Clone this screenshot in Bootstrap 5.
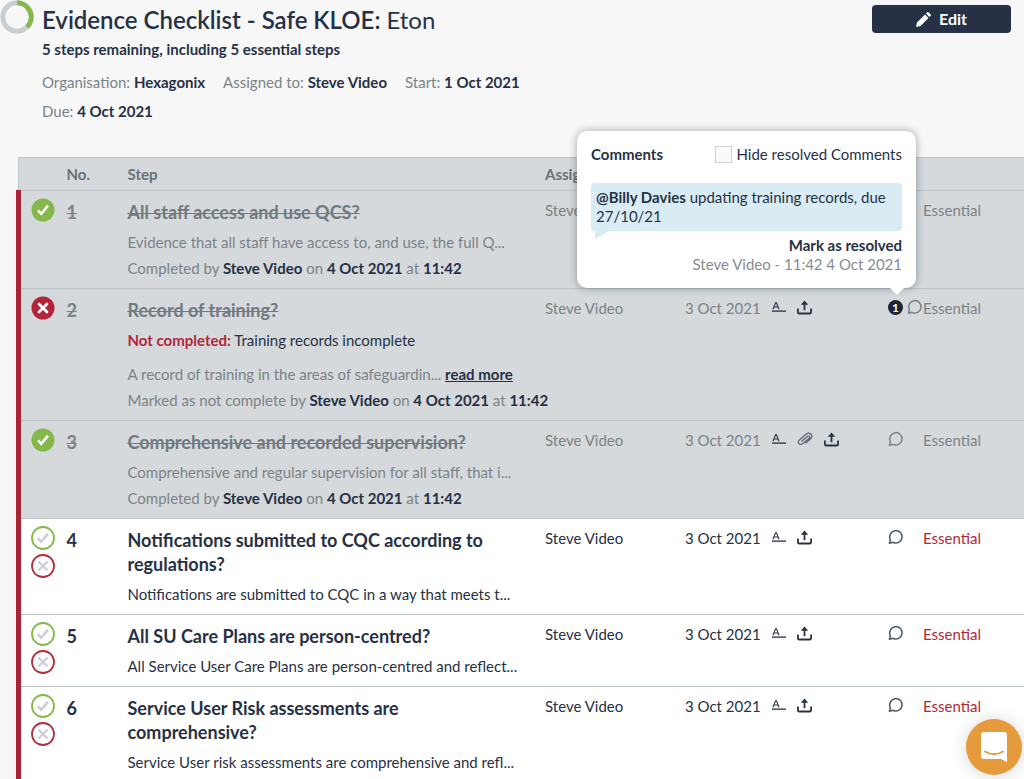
<!DOCTYPE html>
<html lang="en">
<head>
<meta charset="utf-8">
<meta name="viewport" content="width=device-width, initial-scale=1">
<title>Evidence Checklist</title>
<link href="https://cdn.jsdelivr.net/npm/bootstrap@5.3.0/dist/css/bootstrap.min.css" rel="stylesheet">
<style>
  :root { --ink: #273145; --muted-ink: #7b8387; --brand-red: #ab2335; --brand-green: #84b94a; --line: #bcc4c7; }
  body { background: #f7f7f7; color: var(--ink); font-family: Lato, "Liberation Sans", sans-serif; font-size: 16px; line-height: 24px; }
  strong, .strong-text { font-weight: 700; }
  .page-title { font-size: 24px; line-height: 32px; font-weight: 600; }
  .page-title span { font-weight: 400; }
  .summary { font-size: 15px; line-height: 26px; font-weight: 700; }
  .meta { color: var(--muted-ink); font-size: 15px; line-height: 24px; column-gap: 18px; row-gap: 5px; }
  .meta strong { color: var(--ink); }
  .ring { width: 34px; height: 34px; flex: none; }
  .intro { padding-left: 8px; padding-top: 4px; max-width: 560px; }
  .btn-edit { --bs-btn-bg: #273145; --bs-btn-color: #fff; --bs-btn-hover-bg: #38435a; --bs-btn-hover-color: #fff; width: 139px; height: 28px; margin: 5px 13px 0 0; font-size: 16px; line-height: 20px; font-weight: 700; border-radius: 4px; }
  .steps-wrap { padding: 34px 0 0 16px; }
  .steps { width: 100%; table-layout: fixed; border-collapse: collapse; }
  .steps th { height: 33px; padding: 0; font-size: 15px; font-weight: 700; color: #697277; background: #d5d9dc; border-top: 1px solid var(--line); border-bottom: 1px solid var(--line); }
  .steps thead th:first-child { border-left: 1px solid var(--line); }
  .steps td { padding: 7px 0; vertical-align: top; background: #fff; border-top: 1px solid var(--line); white-space: nowrap; }
  .steps tbody td:first-child { border-left: 5px solid var(--brand-red); }
  .steps tr.done td { background: #d5d9dc; color: var(--muted-ink); }
  .steps td.step-no, .steps td.step-main { padding-top: 9px; }
  .step-no, .step-name { font-size: 18px; line-height: 24px; font-weight: 700; }
  .step-name { margin: 0 0 5px; white-space: normal; padding-right: 40px; }
  .step-line { margin: 0; font-size: 15px; line-height: 26px; }
  .done .step-no, .done .step-name { color: #717a7f; text-decoration: line-through; text-decoration-thickness: 1px; }
  .done strong, .done .reason, .done .read-more { color: var(--ink); }
  .done .reason { margin-bottom: 8px; }
  .done .reason strong { color: #b3273a; }
  .cell-text { font-size: 15px; line-height: 24px; }
  .essential { color: #b3273a; }
  .done .essential { color: var(--muted-ink); }
  .plain { border: 0; padding: 0; background: none; color: inherit; display: inline-flex; align-items: center; }
  .plain svg, .ring, .btn-edit svg, .chat-launcher svg { display: block; }
  .marks { padding-left: 10px; gap: 4px; }
  .actions { height: 22px; gap: 11px; color: var(--ink); }
  .talk { height: 22px; color: #4b5464; }
  .done .talk { color: var(--muted-ink); }
  .talk-count { width: 15px; height: 15px; border-radius: 50%; background: #1d2436; color: #fff; font-size: 12px; line-height: 15px; font-weight: 700; text-align: center; margin-right: 4px; flex: none; }
  .comments-pop { position: absolute; right: 7px; bottom: 30px; width: 339px; padding: 11px 14px 13px; background: #fff; color: var(--ink); border-radius: 10px; box-shadow: 0 0 8px rgba(30, 38, 48, .4); font-size: 15px; line-height: 24px; white-space: normal; z-index: 5; }
  .comments-pop::after { content: ""; position: absolute; right: 11px; bottom: -7px; border: solid transparent; border-width: 8px 8px 0; border-top-color: #fff; }
  .hide-box { appearance: none; width: 17px; height: 17px; margin: 0 4px 0 0; border: 1px solid #cdd2d2; background: #f8f9f9; }
  .bubble { position: relative; margin: 17px 0 5px; padding: 5px; background: #d9ecf4; border-radius: 4px; line-height: 19px; }
  .bubble::after { content: ""; position: absolute; left: 4px; bottom: -8px; border: solid transparent; border-width: 8px 14px 0 0; border-top-color: #d9ecf4; }
  .comment-foot { line-height: 19px; padding-bottom: 1px; }
  .stamp { color: #868c91; }
  .chat-launcher { position: fixed; right: 2px; bottom: 4px; width: 56px; height: 56px; border-radius: 50%; background: #e59a3c; box-shadow: 0 1px 18px rgba(0, 0, 0, .16); justify-content: center; z-index: 10; }
</style>
</head>
<body>
<svg class="d-none" aria-hidden="true">
  <symbol id="tick-on" viewBox="0 0 24 24"><circle cx="12" cy="12" r="11.5" fill="#84b94a"/><path d="M7 12.4l3.2 3.4L17 7.6" fill="none" stroke="#fff" stroke-width="2.6"/></symbol>
  <symbol id="cross-on" viewBox="0 0 24 24"><circle cx="12" cy="12" r="11.5" fill="#b3233a"/><path d="M8 8l8 8M16 8l-8 8" fill="none" stroke="#fff" stroke-width="2.8" stroke-linecap="round"/></symbol>
  <symbol id="tick-off" viewBox="0 0 24 24"><circle cx="12" cy="12" r="11" fill="#fff" stroke="#84b94a" stroke-width="1.8"/><path d="M7 12.4l3.2 3.4L17 7.6" fill="none" stroke="#cbd0d8" stroke-width="2.6"/></symbol>
  <symbol id="cross-off" viewBox="0 0 24 24"><circle cx="12" cy="12" r="11" fill="#fff" stroke="#b3303f" stroke-width="1.8"/><path d="M7.5 7.5l9 9M16.5 7.5l-9 9" fill="none" stroke="#cbd0d8" stroke-width="2.4"/></symbol>
  <symbol id="sign" viewBox="0 0 16 16"><path d="M1 10.5L4.3 3h.6L8 10.5M2.300 8h4.500" fill="none" stroke="currentColor" stroke-width="1.2"/><path d="M0 12.700h16" stroke="currentColor" stroke-width="1.5"/></symbol>
  <symbol id="upload" viewBox="0 0 16 16"><path d="M1 9v4q0 1.400 1.400 1.400h11.200q1.400 0 1.400-1.400V9M8 11V3" fill="none" stroke="currentColor" stroke-width="1.9"/><path d="M8 .5L12 5H4z" fill="currentColor"/></symbol>
  <symbol id="clip" viewBox="0 0 16 16"><path d="M4.500 10.500l6-5.200q1.200-.8 2 .1t-.2 1.900l-6.800 5.500q-2.100 1.400-3.600-.1t.2-3.500l6.800-6q2.800-2 4.900-.2t.3 4.400L8.500 12.200" fill="none" stroke="#566070" stroke-width="1.2"/></symbol>
  <symbol id="talk" viewBox="0 0 16 16"><path d="M1.500 14.200l.8-3.700a6.200 6.200 0 1 1 2.700 2.800z" fill="none" stroke="currentColor" stroke-width="1.5" stroke-linejoin="round"/></symbol>
</svg>

<header class="d-flex align-items-start">
  <svg class="ring" viewBox="0 0 34 34" role="img" aria-label="Progress"><circle cx="17" cy="17" r="14.2" fill="none" stroke="#c8ced2" stroke-width="5"/><path d="M17 2.800A14.200 14.200 0 0 1 27 27" fill="none" stroke="#84b94a" stroke-width="5"/></svg>
  <div class="intro flex-grow-1">
    <h1 class="page-title mb-0">Evidence Checklist - Safe KLOE: <span>Eton</span></h1>
    <p class="summary mb-2">5 steps remaining, including 5 essential steps</p>
    <div class="meta d-flex flex-wrap">
      <span>Organisation: <strong>Hexagonix</strong></span>
      <span>Assigned to: <strong>Steve Video</strong></span>
      <span>Start: <strong>1 Oct 2021</strong></span>
      <span>Due: <strong>4 Oct 2021</strong></span>
    </div>
  </div>
  <button type="button" class="btn btn-edit ms-auto d-flex align-items-center justify-content-center gap-2 p-0"><svg width="15" height="15" viewBox="0 0 15 15" fill="#fff"><path d="M0 15l1-4.500L9 2.500 12.500 6l-8 8zM10 1.500l1-1q.8-.8 1.700 0l1.800 1.800q.8.900 0 1.700l-1 1z"/></svg>Edit</button>
</header>

<main class="steps-wrap">
<table class="steps">
  <colgroup><col style="width:48px"><col style="width:61px"><col><col style="width:140px"><col style="width:87px"><col style="width:116px"><col style="width:35px"><col style="width:101px"></colgroup>
  <thead><tr><th></th><th>No.</th><th>Step</th><th>Assigned to</th><th></th><th></th><th></th><th></th></tr></thead>
  <tbody>
    <tr class="done">
      <td><div class="marks d-flex flex-column align-items-start"><button class="plain" aria-label="Completed"><svg width="24" height="24"><use href="#tick-on"/></svg></button></div></td>
      <td class="step-no">1</td>
      <td class="step-main"><h2 class="step-name">All staff access and use QCS?</h2><p class="step-line">Evidence that all staff have access to, and use, the full Q...</p><p class="step-line">Completed by <strong>Steve Video</strong> on <strong>4 Oct 2021</strong> at <strong>11:42</strong></p></td>
      <td class="cell-text">Steve Video</td><td></td><td></td><td></td>
      <td class="cell-text essential">Essential</td>
    </tr>
    <tr class="done">
      <td><div class="marks d-flex flex-column align-items-start"><button class="plain" aria-label="Not completed"><svg width="24" height="24"><use href="#cross-on"/></svg></button></div></td>
      <td class="step-no">2</td>
      <td class="step-main"><h2 class="step-name">Record of training?</h2><p class="step-line reason"><strong>Not completed:</strong> Training records incomplete</p><p class="step-line">A record of training in the areas of safeguardin... <a class="read-more strong-text" href="#">read more</a></p><p class="step-line">Marked as not complete by <strong>Steve Video</strong> on <strong>4 Oct 2021</strong> at <strong>11:42</strong></p></td>
      <td class="cell-text">Steve Video</td><td class="cell-text">3 Oct 2021</td>
      <td><div class="actions d-flex align-items-center"><button class="plain" aria-label="Sign"><svg width="14" height="14"><use href="#sign"/></svg></button><button class="plain" aria-label="Upload"><svg width="15" height="15"><use href="#upload"/></svg></button></div></td>
      <td><div class="talk d-flex align-items-center position-relative">
        <span class="talk-count">1</span><button class="plain" aria-label="Comments"><svg width="16" height="16"><use href="#talk"/></svg></button>
        <section class="comments-pop">
          <div class="d-flex align-items-center justify-content-between"><strong>Comments</strong><div class="d-flex align-items-center"><input class="hide-box" type="checkbox" id="hide"><label for="hide">Hide resolved Comments</label></div></div>
          <div class="bubble"><strong>@Billy Davies</strong> updating training records, due 27/10/21</div>
          <div class="comment-foot d-flex flex-column align-items-end"><button class="plain strong-text">Mark as resolved</button><span class="stamp">Steve Video - 11:42 4 Oct 2021</span></div>
        </section>
      </div></td>
      <td class="cell-text essential">Essential</td>
    </tr>
    <tr class="done">
      <td><div class="marks d-flex flex-column align-items-start"><button class="plain" aria-label="Completed"><svg width="24" height="24"><use href="#tick-on"/></svg></button></div></td>
      <td class="step-no">3</td>
      <td class="step-main"><h2 class="step-name">Comprehensive and recorded supervision?</h2><p class="step-line">Comprehensive and regular supervision for all staff, that i...</p><p class="step-line">Completed by <strong>Steve Video</strong> on <strong>4 Oct 2021</strong> at <strong>11:42</strong></p></td>
      <td class="cell-text">Steve Video</td><td class="cell-text">3 Oct 2021</td>
      <td><div class="actions d-flex align-items-center"><button class="plain" aria-label="Sign"><svg width="14" height="14"><use href="#sign"/></svg></button><button class="plain" aria-label="Attach"><svg width="16" height="16"><use href="#clip"/></svg></button><button class="plain" aria-label="Upload"><svg width="15" height="15"><use href="#upload"/></svg></button></div></td>
      <td><div class="talk d-flex align-items-center"><button class="plain" aria-label="Comments"><svg width="16" height="16"><use href="#talk"/></svg></button></div></td>
      <td class="cell-text essential">Essential</td>
    </tr>
    <tr>
      <td><div class="marks d-flex flex-column align-items-start"><button class="plain" aria-label="Complete"><svg width="24" height="24"><use href="#tick-off"/></svg></button><button class="plain" aria-label="Not complete"><svg width="24" height="24"><use href="#cross-off"/></svg></button></div></td>
      <td class="step-no">4</td>
      <td class="step-main"><h2 class="step-name">Notifications submitted to CQC according to regulations?</h2><p class="step-line">Notifications are submitted to CQC in a way that meets t...</p></td>
      <td class="cell-text">Steve Video</td><td class="cell-text">3 Oct 2021</td>
      <td><div class="actions d-flex align-items-center"><button class="plain" aria-label="Sign"><svg width="14" height="14"><use href="#sign"/></svg></button><button class="plain" aria-label="Upload"><svg width="15" height="15"><use href="#upload"/></svg></button></div></td>
      <td><div class="talk d-flex align-items-center"><button class="plain" aria-label="Comments"><svg width="16" height="16"><use href="#talk"/></svg></button></div></td>
      <td class="cell-text essential">Essential</td>
    </tr>
    <tr>
      <td><div class="marks d-flex flex-column align-items-start"><button class="plain" aria-label="Complete"><svg width="24" height="24"><use href="#tick-off"/></svg></button><button class="plain" aria-label="Not complete"><svg width="24" height="24"><use href="#cross-off"/></svg></button></div></td>
      <td class="step-no">5</td>
      <td class="step-main"><h2 class="step-name">All SU Care Plans are person-centred?</h2><p class="step-line">All Service User Care Plans are person-centred and reflect...</p></td>
      <td class="cell-text">Steve Video</td><td class="cell-text">3 Oct 2021</td>
      <td><div class="actions d-flex align-items-center"><button class="plain" aria-label="Sign"><svg width="14" height="14"><use href="#sign"/></svg></button><button class="plain" aria-label="Upload"><svg width="15" height="15"><use href="#upload"/></svg></button></div></td>
      <td><div class="talk d-flex align-items-center"><button class="plain" aria-label="Comments"><svg width="16" height="16"><use href="#talk"/></svg></button></div></td>
      <td class="cell-text essential">Essential</td>
    </tr>
    <tr>
      <td><div class="marks d-flex flex-column align-items-start"><button class="plain" aria-label="Complete"><svg width="24" height="24"><use href="#tick-off"/></svg></button><button class="plain" aria-label="Not complete"><svg width="24" height="24"><use href="#cross-off"/></svg></button></div></td>
      <td class="step-no">6</td>
      <td class="step-main"><h2 class="step-name">Service User Risk assessments are comprehensive?</h2><p class="step-line">Service User risk assessments are comprehensive and refl...</p></td>
      <td class="cell-text">Steve Video</td><td class="cell-text">3 Oct 2021</td>
      <td><div class="actions d-flex align-items-center"><button class="plain" aria-label="Sign"><svg width="14" height="14"><use href="#sign"/></svg></button><button class="plain" aria-label="Upload"><svg width="15" height="15"><use href="#upload"/></svg></button></div></td>
      <td><div class="talk d-flex align-items-center"><button class="plain" aria-label="Comments"><svg width="16" height="16"><use href="#talk"/></svg></button></div></td>
      <td class="cell-text essential">Essential</td>
    </tr>
  </tbody>
</table>
</main>

<button class="plain chat-launcher" aria-label="Open chat"><svg width="26" height="30" viewBox="0 0 26 30"><path d="M3 0h20q3 0 3 3v27l-6-3H3q-3 0-3-3V3q0-3 3-3z" fill="#fff"/><path d="M4 19.500q9 5.500 18 0" fill="none" stroke="#e59a3c" stroke-width="1.8" stroke-linecap="round"/></svg></button>
<script src="https://cdn.jsdelivr.net/npm/bootstrap@5.3.0/dist/js/bootstrap.bundle.min.js"></script>
</body>
</html>
